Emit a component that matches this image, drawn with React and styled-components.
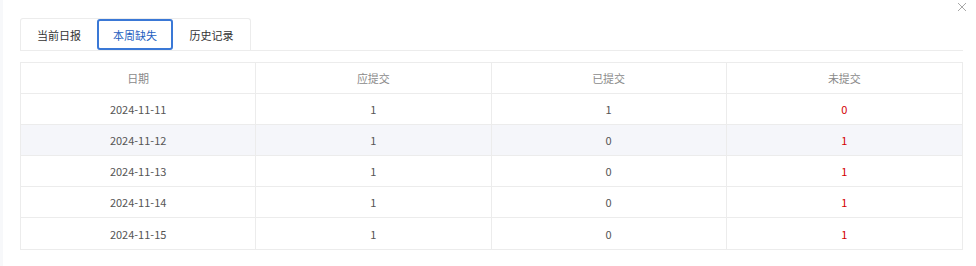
import React from "react";
import styled, { createGlobalStyle } from "styled-components";

const Global = createGlobalStyle`
  html, body { margin: 0; padding: 0; background: #fff; }
  body { font-family: "Noto Sans CJK SC", "Noto Sans", sans-serif; font-size: 11px; color: #333; }
`;

const Page = styled.div`
  position: relative;
  width: 976px;
  height: 266px;
  box-sizing: border-box;
  padding: 18px 13px 0 17px;
  border-left: 3px solid #f7f8fa;
`;

const Close = styled.div`
  position: absolute;
  top: 2px;
  right: 9px;
  width: 10px;
  height: 10px;
  svg { display: block; }
`;

const TabBar = styled.div`
  display: flex;
  border-bottom: 1px solid #ececec;
`;

const TabGroup = styled.div`
  display: flex;
  border: 1px solid #ececec;
  border-bottom: none;
  border-radius: 3px 3px 0 0;
`;

const Tab = styled.div`
  box-sizing: border-box;
  width: ${(p) => p.$w}px;
  height: 31px;
  display: flex;
  align-items: center;
  justify-content: center;
  font-size: 11px;
  color: ${(p) => (p.$active ? "#1f5fbf" : "#333")};
  border: ${(p) => (p.$active ? "2px solid #3a78d6" : "2px solid transparent")};
  border-radius: 3px;
`;

const Table = styled.div`
  margin-top: 11px;
  border: 1px solid #ececec;
`;

const Row = styled.div`
  display: grid;
  grid-template-columns: repeat(4, 1fr);
  height: ${(p) => (p.$last ? "31px" : "31px")};
  background: ${(p) => (p.$striped ? "#f5f6fa" : "#fff")};
  border-bottom: ${(p) => (p.$last ? "none" : "1px solid #ececec")};
  box-sizing: border-box;
`;

const Cell = styled.div`
  display: flex;
  align-items: center;
  justify-content: center;
  font-size: 11px;
  color: ${(p) => (p.$red ? "#d40000" : p.$head ? "#8a8a8a" : "#555")};
  border-right: ${(p) => (p.$lastCol ? "none" : "1px solid #ececec")};
`;

const rows = [
  ["2024-11-11", "1", "1", "0"],
  ["2024-11-12", "1", "0", "1"],
  ["2024-11-13", "1", "0", "1"],
  ["2024-11-14", "1", "0", "1"],
  ["2024-11-15", "1", "0", "1"],
];

export default function App() {
  return (
    <>
      <Global />
      <Page>
        <Close>
          <svg width="10" height="10" viewBox="0 0 10 10">
            <path d="M1 1 L9 9 M9 1 L1 9" stroke="#a8a8a8" strokeWidth="1" fill="none" />
          </svg>
        </Close>
        <TabBar>
          <TabGroup>
            <Tab $w={76}>当前日报</Tab>
            <Tab $w={76} $active>本周缺失</Tab>
            <Tab $w={77}>历史记录</Tab>
          </TabGroup>
        </TabBar>
        <Table>
          <Row>
            <Cell $head>日期</Cell>
            <Cell $head>应提交</Cell>
            <Cell $head>已提交</Cell>
            <Cell $head $lastCol>未提交</Cell>
          </Row>
          {rows.map((r, i) => (
            <Row key={r[0]} $striped={i === 1} $last={i === rows.length - 1}>
              <Cell>{r[0]}</Cell>
              <Cell>{r[1]}</Cell>
              <Cell>{r[2]}</Cell>
              <Cell $red $lastCol>{r[3]}</Cell>
            </Row>
          ))}
        </Table>
      </Page>
    </>
  );
}
